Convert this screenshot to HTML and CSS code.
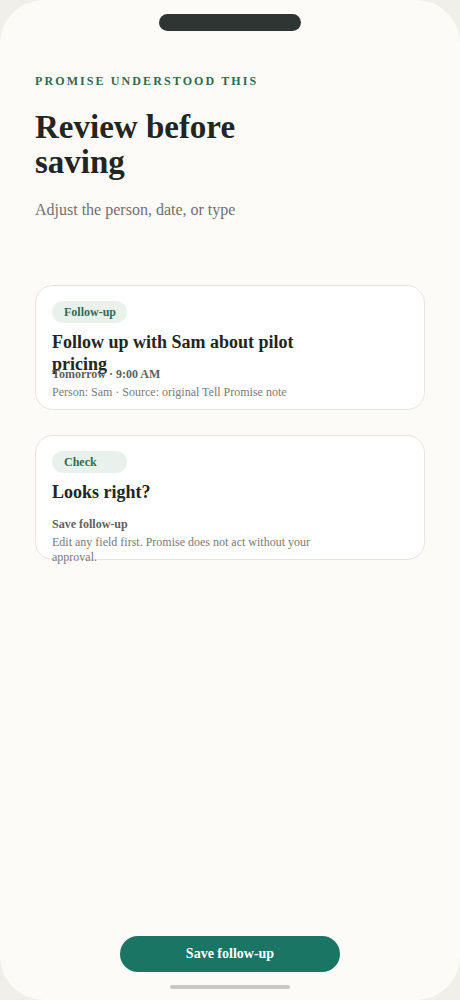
FILE: index.html
```html
<!DOCTYPE html>
<html lang="en">
<head>
<meta charset="utf-8">
<title>Review before saving</title>
<link rel="stylesheet" href="styles.css">
</head>
<body>
  <div class="phone">
    <div class="notch"></div>

    <div class="head">
      <p class="eyebrow">Promise understood this</p>
      <h1 class="title">Review before saving</h1>
      <p class="sub">Adjust the person, date, or type</p>
    </div>

    <div class="cards">
      <div class="card">
        <span class="tag">Follow-up</span>
        <h2 class="cardTitle">Follow up with Sam about pilot pricing</h2>
        <p class="meta">Tomorrow · 9:00 AM</p>
        <p class="note">Person: Sam · Source: original Tell Promise note</p>
      </div>
      <div class="card">
        <span class="tag">Check</span>
        <h2 class="cardTitle">Looks right?</h2>
        <p class="meta">Save follow-up</p>
        <p class="note">Edit any field first. Promise does not act without your approval.</p>
      </div>
    </div>

    <div class="foot">
      <button class="saveBtn" type="button">Save follow-up</button>
      <div class="homeBar"></div>
    </div>
  </div>
</body>
</html>
```

FILE: styles.css
```css
html,body,h1,h2,p{
   margin: 0;
   padding: 0;
}
body{
   background: #f1efea;
   font-family: "Liberation Serif", "Times New Roman", serif;
}
.phone{
   height: 1000px;
   box-sizing: border-box;
   background: #fcfbf7;
   border-radius: 44px;
   display: flex;
   flex-direction: column;
   padding: 14px 35px 11px;
}
.notch{
   align-self: center;
   width: 142px;
   height: 17px;
   border-radius: 9px;
   background: #2f3532;
}
.head{
   padding-top: 43px;
}
.eyebrow{
   color: #2e6a50;
   font-size: 12px;
   font-weight: bold;
   letter-spacing: 2.1px;
   text-transform: uppercase;
   line-height: 14px;
}
.title{
   width: 250px;
   margin-top: 22px;
   font-size: 33px;
   line-height: 35px;
   color: #222522;
}
.sub{
   margin-top: 20px;
   font-size: 16px;
   line-height: 20px;
   color: #707070;
}
.cards{
   margin-top: 65px;
   display: flex;
   flex-direction: column;
   gap: 25px;
}
.card{
   height: 125px;
   box-sizing: border-box;
   background: #fff;
   border: 1px solid #e7e5df;
   border-radius: 18px;
   padding: 15px 16px;
}
.tag{
   display: inline-block;
   width: 75px;
   box-sizing: border-box;
   height: 22px;
   line-height: 22px;
   padding-left: 12px;
   border-radius: 11px;
   background: #e9f1ed;
   color: #2f6b55;
   font-size: 12px;
   font-weight: bold;
}
.cardTitle{
   width: 270px;
   height: 24px;
   margin-top: 8px;
   font-size: 18px;
   line-height: 22px;
   color: #222522;
}
.meta{
   margin-top: 12px;
   font-size: 12px;
   line-height: 14px;
   font-weight: bold;
   color: #5f6160;
}
.note{
   width: 280px;
   margin-top: 4px;
   font-size: 12px;
   line-height: 15px;
   color: #7a7a78;
}
.foot{
   margin-top: auto;
   display: flex;
   flex-direction: column;
   align-items: center;
}
.saveBtn{
   width: 220px;
   height: 36px;
   border: none;
   border-radius: 18px;
   background: #1a7565;
   color: #fff;
   font-family: inherit;
   font-size: 14px;
   font-weight: bold;
}
.homeBar{
   width: 120px;
   height: 4px;
   margin-top: 13px;
   border-radius: 2px;
   background: #c9c7c3;
}
```
